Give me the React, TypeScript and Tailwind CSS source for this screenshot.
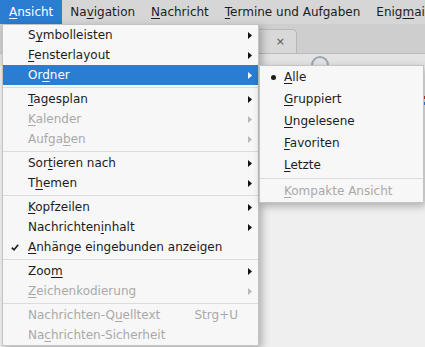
type Item =
  | { sep: true }
  | {
      sep?: false;
      label: string;
      u: number;
      sub?: boolean;
      disabled?: boolean;
      active?: boolean;
      check?: boolean;
      accel?: string;
    };

const mainItems: Item[] = [
  { label: "Symbolleisten", u: 1, sub: true },
  { label: "Fensterlayout", u: 0, sub: true },
  { label: "Ordner", u: 2, sub: true, active: true },
  { sep: true },
  { label: "Tagesplan", u: 0, sub: true },
  { label: "Kalender", u: 0, sub: true, disabled: true },
  { label: "Aufgaben", u: 5, sub: true, disabled: true },
  { sep: true },
  { label: "Sortieren nach", u: 3, sub: true },
  { label: "Themen", u: 1, sub: true },
  { sep: true },
  { label: "Kopfzeilen", u: 0, sub: true },
  { label: "Nachrichteninhalt", u: 11, sub: true },
  { label: "Anhänge eingebunden anzeigen", u: 0, check: true },
  { sep: true },
  { label: "Zoom", u: 3, sub: true },
  { label: "Zeichenkodierung", u: 0, sub: true, disabled: true },
  { sep: true },
  { label: "Nachrichten-Quelltext", u: 13, disabled: true, accel: "Strg+U" },
  { label: "Nachrichten-Sicherheit", u: 2, disabled: true },
];

const folderItems = [
  { label: "Alle", u: 0, bullet: true },
  { label: "Gruppiert", u: 0 },
  { label: "Ungelesene", u: 0 },
  { label: "Favoriten", u: 0 },
  { label: "Letzte", u: 0 },
];

function Mnemonic({ text, u }: { text: string; u: number }) {
  return (
    <span className="whitespace-pre">
      {text.slice(0, u)}
      <span className="underline underline-offset-[2px] decoration-1">{text.charAt(u)}</span>
      {text.slice(u + 1)}
    </span>
  );
}

function Arrow({ color }: { color: string }) {
  return (
    <svg width="4" height="7" viewBox="0 0 4 7" className="shrink-0">
      <path d="M0 0 L4 3.5 L0 7 Z" fill={color} />
    </svg>
  );
}

function MenuRow({ item }: { item: Exclude<Item, { sep: true }> }) {
  const text = item.active
    ? "text-white bg-[#2a7dd1]"
    : item.disabled
      ? "text-[#a9a9a9]"
      : "text-[#1c1c1c]";
  return (
    <div className={`relative flex h-[20px] items-center pl-[25px] pr-[6px] ${text}`}>
      {item.check && (
        <svg width="8" height="7" viewBox="0 0 8 7" className="absolute left-[8px] top-[7px]">
          <path d="M0.8 3.6 L3 5.8 L7.2 0.8" stroke="#1c1c1c" strokeWidth="1.6" fill="none" />
        </svg>
      )}
      <Mnemonic text={item.label} u={item.u} />
      {item.accel && <span className="ml-auto mr-[14px]">{item.accel}</span>}
      {item.sub && (
        <span className="ml-auto">
          <Arrow color={item.active ? "#ffffff" : item.disabled ? "#b9b9b9" : "#111111"} />
        </span>
      )}
    </div>
  );
}

function Separator() {
  return (
    <div className="flex h-[4px] flex-col justify-center">
      <div className="h-px bg-[#dcdcdc]" />
    </div>
  );
}

export default function App() {
  const bar = [
    { label: "Navigation", u: 2 },
    { label: "Nachricht", u: 0 },
    { label: "Termine und Aufgaben", u: 0 },
    { label: "Enigmail", u: 4 },
  ];

  return (
    <div
      className="relative h-[347px] w-[425px] overflow-hidden bg-[#efefef] text-[12px] leading-none"
      style={{ fontFamily: '"DejaVu Sans", Verdana, sans-serif' }}
    >
      {/* menubar */}
      <div className="flex h-[24px] items-stretch bg-[#d6d6d6] text-[#1c1c1c]">
        <div className="flex items-center bg-[#2a7dd1] pl-[9px] pr-[9px] text-white">
          <Mnemonic text="Ansicht" u={0} />
        </div>
        {bar.map((b) => (
          <div key={b.label} className="flex items-center px-[8px] whitespace-nowrap">
            <Mnemonic text={b.label} u={b.u} />
          </div>
        ))}
      </div>

      {/* window behind */}
      <div className="flex h-[30px] items-end border-b border-[#bdbdbd] bg-[#cecece]">
        <div className="ml-[240px] flex h-[24px] w-[57px] items-center justify-end rounded-tr-[5px] border-r border-t border-[#b8b8b8] bg-[#d8d8d8] pr-[11px] text-[11px] text-[#555]">
          ×
        </div>
      </div>
      <div className="flex h-[12px] items-end bg-[#e3e3e3]">
        <div className="ml-[311px] h-[10px] w-[18px] rounded-t-full border-x-2 border-t-2 border-[#9aa7b5]" />
      </div>
      <div className="flex h-[40px] justify-end">
        <div className="flex w-[2px] flex-col gap-[3px] pt-[30px]">
          <div className="h-[3px] bg-[#c0392b]" />
          <div className="h-[3px] bg-[#4a7fd6]" />
        </div>
      </div>

      {/* Ansicht menu */}
      <div className="absolute left-[2px] top-[24px] w-[257px] border border-[#c3c3c3] bg-[#f7f7f7] shadow-[3px_3px_8px_rgba(0,0,0,0.28)]">
        {mainItems.map((item, i) =>
          item.sep ? <Separator key={i} /> : <MenuRow key={i} item={item} />
        )}
      </div>

      {/* Ordner submenu */}
      <div className="absolute left-[259px] top-[65px] w-[165px] border border-[#c3c3c3] bg-[#f7f7f7] text-[#1c1c1c] shadow-[2px_3px_8px_rgba(0,0,0,0.28)]">
        {folderItems.map((f) => (
          <div key={f.label} className="relative flex h-[22px] items-center pl-[24px]">
            {f.bullet && (
              <span className="absolute left-[11px] top-[9px] h-[5px] w-[5px] rounded-full bg-[#1c1c1c]" />
            )}
            <Mnemonic text={f.label} u={f.u} />
          </div>
        ))}
        <Separator />
        <div className="flex h-[22px] items-center pl-[24px] text-[#a9a9a9]">
          <Mnemonic text="Kompakte Ansicht" u={0} />
        </div>
      </div>
    </div>
  );
}
